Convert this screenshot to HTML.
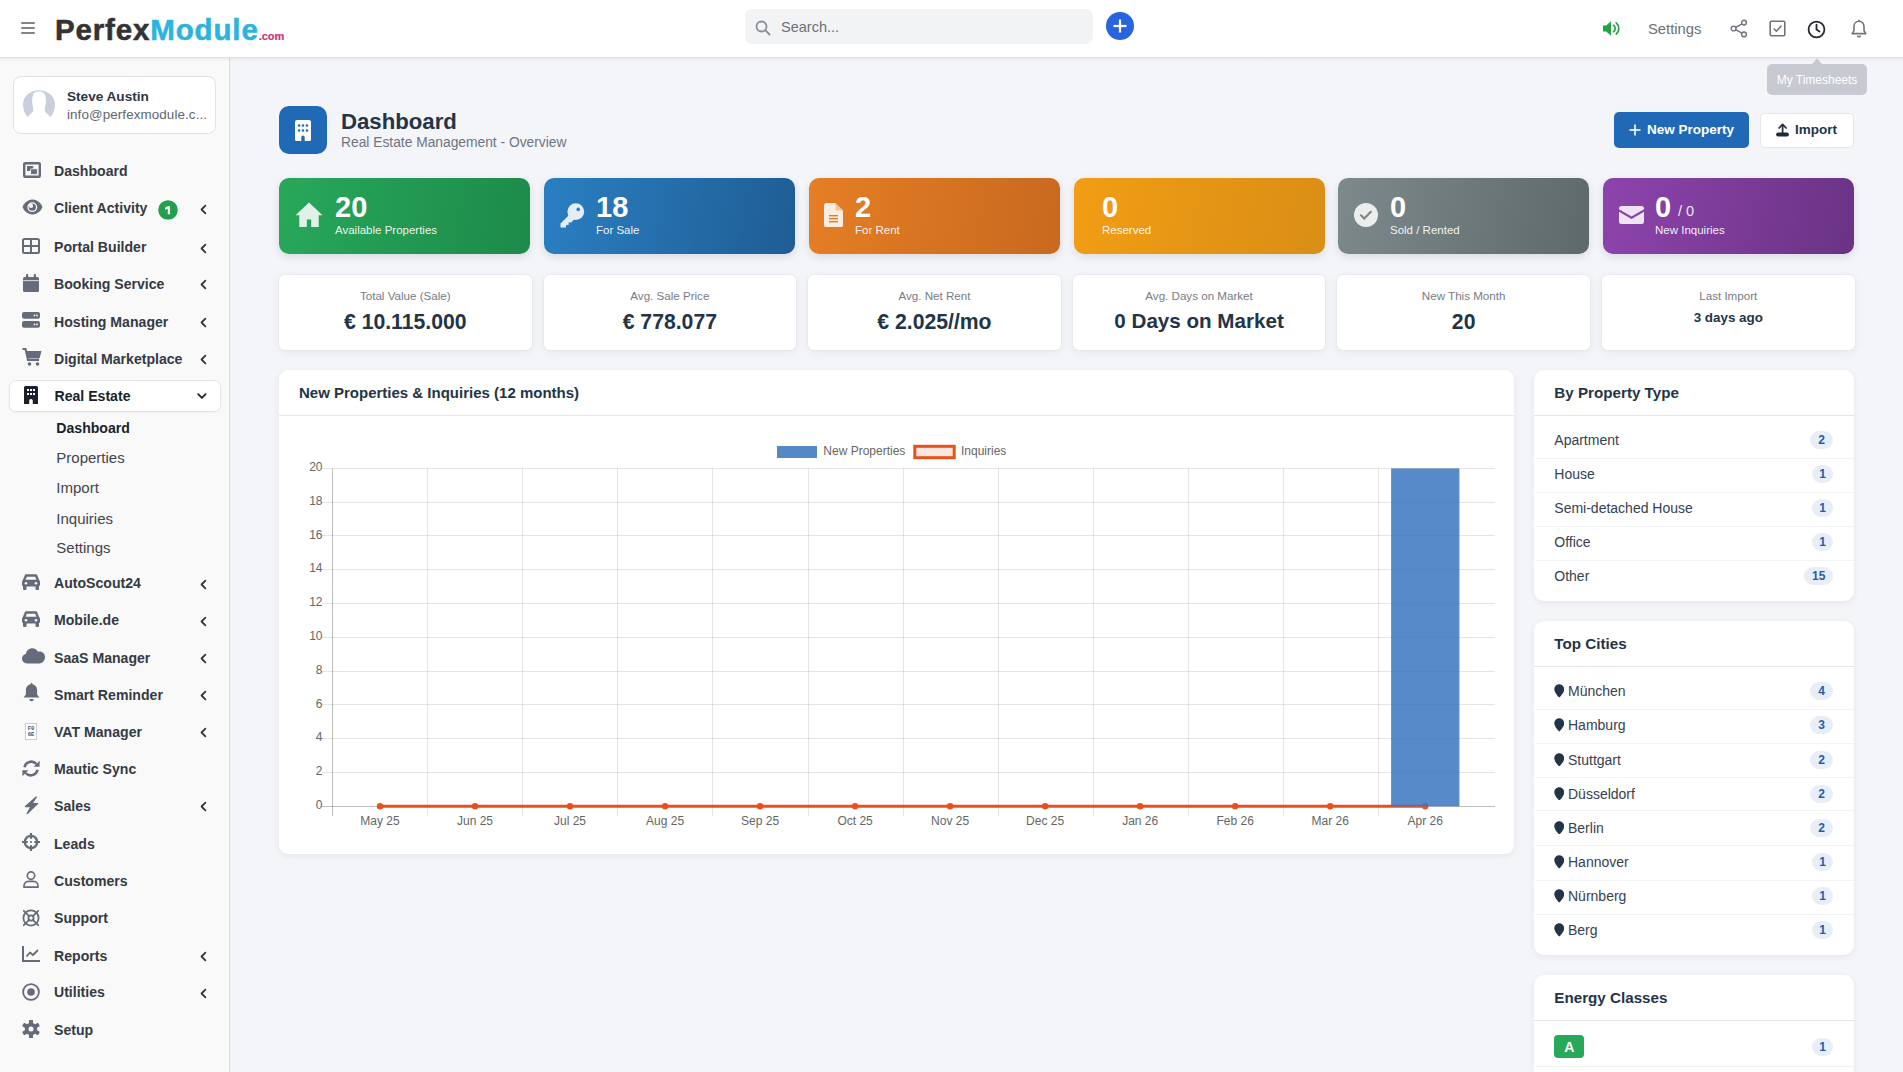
<!DOCTYPE html><html><head><meta charset="utf-8"><style>
*{box-sizing:border-box;margin:0;padding:0}
html,body{width:1903px;height:1072px;overflow:hidden;font-family:"Liberation Sans",sans-serif;background:#f4f5f9;}
svg{display:block}
</style></head><body>
<div style="position:absolute;left:0px;top:58px;width:229px;height:1014px;background:#f9f9f9;"></div>
<div style="position:absolute;left:226px;top:58px;width:3px;height:1014px;background:linear-gradient(90deg,#f9f9f9,#fafbfc);"></div>
<div style="position:absolute;left:229px;top:58px;width:1px;height:1014px;background:#d5d9dd;"></div>
<div style="position:absolute;left:230px;top:58px;width:2px;height:1014px;background:linear-gradient(90deg,#f0f4f7,#f4f5f9);"></div>
<div style="position:absolute;left:12.5px;top:76px;width:203px;height:58px;background:#fff;border:1px solid #e1e3e7;border-radius:8px;"></div>
<svg style="position:absolute;left:23px;top:90px;" width="32" height="28" viewBox="0 0 32 28"><path d="M4.5 27C1.5 23.5 0 19 0 14.5 0 6.5 7 0.3 16 0.3S32 6.5 32 14.5c0 4.5-1.5 9-4.5 12.5L22 21.5c-.6-1.5-.2-3.5.6-6.5.6-3 .4-8-1.2-11.5C20 2 18 1.6 16 1.6s-4 .4-5.4 1.9C9 7 8.8 12 9.4 15c.8 3 1.2 5 .6 6.5z" fill="#c9cfdc"/></svg>
<div style="position:absolute;top:90.16px;font-size:13.6px;line-height:13.6px;font-weight:bold;color:#2f3542;white-space:nowrap;left:67px;">Steve Austin</div>
<div style="position:absolute;top:108.45px;font-size:13.4px;line-height:13.4px;font-weight:normal;color:#5f6673;white-space:nowrap;left:67px;letter-spacing:0.1px;">info@perfexmodule.c...</div>
<div style="position:absolute;top:164.11px;font-size:14.1px;line-height:14.1px;font-weight:bold;color:#353a43;white-space:nowrap;left:54px;">Dashboard</div>
<svg style="position:absolute;left:23px;top:162px;" width="18" height="16" viewBox="0 0 18 16"><rect x="1.2" y="1.2" width="15.6" height="13.6" rx="1" fill="none" stroke="#656b78" stroke-width="2.4"/><rect x="4" y="4" width="6.3" height="5" rx="0.6" fill="#656b78"/><rect x="7.6" y="6.8" width="6.8" height="5.6" rx="0.8" fill="#656b78" stroke="#f9f9f9" stroke-width="0.9"/></svg>
<div style="position:absolute;top:201.41px;font-size:14.1px;line-height:14.1px;font-weight:bold;color:#353a43;white-space:nowrap;left:54px;">Client Activity</div>
<svg style="position:absolute;left:199px;top:203.60000000000002px;" width="9" height="11" viewBox="0 0 9 11"><path d="M6.4 1.7L2.5 5.5l3.9 3.8" fill="none" stroke="#2f343b" stroke-width="1.75" stroke-linecap="round" stroke-linejoin="round"/></svg>
<svg style="position:absolute;left:22px;top:199px;" width="21" height="16" viewBox="0 0 21 16"><path d="M10.5 0.5C5.5 0.5 1.8 4.5 0.5 8c1.3 3.5 5 7.5 10 7.5s8.7-4 10-7.5C19.2 4.5 15.5.5 10.5.5z" fill="#656b78"/><circle cx="10.3" cy="8.2" r="4.9" fill="#f9f9f9"/><circle cx="10.3" cy="8.2" r="3.6" fill="#656b78"/><circle cx="9" cy="6.9" r="2.1" fill="#f9f9f9"/></svg>
<div style="position:absolute;top:240.41px;font-size:14.1px;line-height:14.1px;font-weight:bold;color:#353a43;white-space:nowrap;left:54px;">Portal Builder</div>
<svg style="position:absolute;left:199px;top:242.60000000000002px;" width="9" height="11" viewBox="0 0 9 11"><path d="M6.4 1.7L2.5 5.5l3.9 3.8" fill="none" stroke="#2f343b" stroke-width="1.75" stroke-linecap="round" stroke-linejoin="round"/></svg>
<svg style="position:absolute;left:22px;top:238px;" width="18" height="16" viewBox="0 0 18 16"><rect x="1" y="1" width="16" height="14" rx="1.5" fill="none" stroke="#656b78" stroke-width="2"/><line x1="9" y1="1" x2="9" y2="15" stroke="#656b78" stroke-width="2"/><line x1="1" y1="8" x2="17" y2="8" stroke="#656b78" stroke-width="2"/></svg>
<div style="position:absolute;top:277.01px;font-size:14.1px;line-height:14.1px;font-weight:bold;color:#353a43;white-space:nowrap;left:54px;">Booking Service</div>
<svg style="position:absolute;left:199px;top:279.2px;" width="9" height="11" viewBox="0 0 9 11"><path d="M6.4 1.7L2.5 5.5l3.9 3.8" fill="none" stroke="#2f343b" stroke-width="1.75" stroke-linecap="round" stroke-linejoin="round"/></svg>
<svg style="position:absolute;left:23px;top:274px;" width="16" height="18" viewBox="0 0 16 18"><rect x="0" y="3" width="16" height="15" rx="1.5" fill="#656b78"/><rect x="3" y="0" width="2.2" height="5" rx="1" fill="#656b78"/><rect x="10.8" y="0" width="2.2" height="5" rx="1" fill="#656b78"/><rect x="0" y="6.3" width="16" height="0.8" fill="#f9f9f9"/></svg>
<div style="position:absolute;top:315.01px;font-size:14.1px;line-height:14.1px;font-weight:bold;color:#353a43;white-space:nowrap;left:54px;">Hosting Manager</div>
<svg style="position:absolute;left:199px;top:317.2px;" width="9" height="11" viewBox="0 0 9 11"><path d="M6.4 1.7L2.5 5.5l3.9 3.8" fill="none" stroke="#2f343b" stroke-width="1.75" stroke-linecap="round" stroke-linejoin="round"/></svg>
<svg style="position:absolute;left:22px;top:312px;" width="18" height="16" viewBox="0 0 18 16"><rect x="0" y="0" width="18" height="6.8" rx="2" fill="#656b78"/><rect x="0" y="9" width="18" height="6.8" rx="2" fill="#656b78"/><circle cx="12.5" cy="3.4" r="0.9" fill="#f9f9f9"/><circle cx="15" cy="3.4" r="0.9" fill="#f9f9f9"/><circle cx="12.5" cy="12.4" r="0.9" fill="#f9f9f9"/><circle cx="15" cy="12.4" r="0.9" fill="#f9f9f9"/></svg>
<div style="position:absolute;top:352.21px;font-size:14.1px;line-height:14.1px;font-weight:bold;color:#353a43;white-space:nowrap;left:54px;">Digital Marketplace</div>
<svg style="position:absolute;left:199px;top:354.40000000000003px;" width="9" height="11" viewBox="0 0 9 11"><path d="M6.4 1.7L2.5 5.5l3.9 3.8" fill="none" stroke="#2f343b" stroke-width="1.75" stroke-linecap="round" stroke-linejoin="round"/></svg>
<svg style="position:absolute;left:22px;top:348px;" width="20" height="18" viewBox="0 0 20 18"><path d="M0.5 1h3l2.5 11h11" fill="none" stroke="#656b78" stroke-width="2"/><path d="M4.3 3h15.2l-2 7.5H5.8z" fill="#656b78"/><circle cx="7.5" cy="16" r="1.8" fill="#656b78"/><circle cx="15.5" cy="16" r="1.8" fill="#656b78"/></svg>
<div style="position:absolute;top:576.31px;font-size:14.1px;line-height:14.1px;font-weight:bold;color:#353a43;white-space:nowrap;left:54px;">AutoScout24</div>
<svg style="position:absolute;left:199px;top:578.5px;" width="9" height="11" viewBox="0 0 9 11"><path d="M6.4 1.7L2.5 5.5l3.9 3.8" fill="none" stroke="#2f343b" stroke-width="1.75" stroke-linecap="round" stroke-linejoin="round"/></svg>
<svg style="position:absolute;left:22px;top:574px;" width="18" height="16" viewBox="0 0 18 16"><path d="M4 1.5h10l2.2 5.5H1.8z" fill="none" stroke="#656b78" stroke-width="2.4" stroke-linejoin="round"/><rect x="0" y="6" width="18" height="6.5" rx="2" fill="#656b78"/><rect x="1" y="11" width="3.5" height="5" rx="1" fill="#656b78"/><rect x="13.5" y="11" width="3.5" height="5" rx="1" fill="#656b78"/><circle cx="4" cy="9.2" r="1.3" fill="#f9f9f9"/><circle cx="14" cy="9.2" r="1.3" fill="#f9f9f9"/></svg>
<div style="position:absolute;top:613.31px;font-size:14.1px;line-height:14.1px;font-weight:bold;color:#353a43;white-space:nowrap;left:54px;">Mobile.de</div>
<svg style="position:absolute;left:199px;top:615.5px;" width="9" height="11" viewBox="0 0 9 11"><path d="M6.4 1.7L2.5 5.5l3.9 3.8" fill="none" stroke="#2f343b" stroke-width="1.75" stroke-linecap="round" stroke-linejoin="round"/></svg>
<svg style="position:absolute;left:22px;top:611px;" width="18" height="16" viewBox="0 0 18 16"><path d="M4 1.5h10l2.2 5.5H1.8z" fill="none" stroke="#656b78" stroke-width="2.4" stroke-linejoin="round"/><rect x="0" y="6" width="18" height="6.5" rx="2" fill="#656b78"/><rect x="1" y="11" width="3.5" height="5" rx="1" fill="#656b78"/><rect x="13.5" y="11" width="3.5" height="5" rx="1" fill="#656b78"/><circle cx="4" cy="9.2" r="1.3" fill="#f9f9f9"/><circle cx="14" cy="9.2" r="1.3" fill="#f9f9f9"/></svg>
<div style="position:absolute;top:650.71px;font-size:14.1px;line-height:14.1px;font-weight:bold;color:#353a43;white-space:nowrap;left:54px;">SaaS Manager</div>
<svg style="position:absolute;left:199px;top:652.9px;" width="9" height="11" viewBox="0 0 9 11"><path d="M6.4 1.7L2.5 5.5l3.9 3.8" fill="none" stroke="#2f343b" stroke-width="1.75" stroke-linecap="round" stroke-linejoin="round"/></svg>
<svg style="position:absolute;left:22px;top:648px;" width="23" height="16" viewBox="0 0 23 16"><path d="M5 15.5C2.2 15.5 0 13.3 0 10.6c0-2.4 1.7-4.4 4-4.9C4.3 2.6 7 0.2 10.3.2c2.5 0 4.6 1.4 5.6 3.5.6-.2 1.2-.3 1.8-.3 2.9 0 5.3 2.4 5.3 5.3v.3c0 3.6-2.6 6.5-5.8 6.5z" fill="#656b78"/></svg>
<div style="position:absolute;top:688.11px;font-size:14.1px;line-height:14.1px;font-weight:bold;color:#353a43;white-space:nowrap;left:54px;">Smart Reminder</div>
<svg style="position:absolute;left:199px;top:690.3px;" width="9" height="11" viewBox="0 0 9 11"><path d="M6.4 1.7L2.5 5.5l3.9 3.8" fill="none" stroke="#2f343b" stroke-width="1.75" stroke-linecap="round" stroke-linejoin="round"/></svg>
<svg style="position:absolute;left:22.5px;top:683px;" width="17" height="19" viewBox="0 0 17 19"><path d="M8.5 1.2c-3.2 0-5.6 2.5-5.6 5.8v4.5L0.6 14.6h15.8l-2.3-3.1V7c0-3.3-2.4-5.8-5.6-5.8z" fill="#656b78"/><rect x="7.5" y="0" width="2" height="2.5" rx="1" fill="#656b78"/><path d="M6.3 16a2.2 2.2 0 0 0 4.4 0z" fill="#656b78"/></svg>
<div style="position:absolute;top:725.11px;font-size:14.1px;line-height:14.1px;font-weight:bold;color:#353a43;white-space:nowrap;left:54px;">VAT Manager</div>
<svg style="position:absolute;left:199px;top:727.3px;" width="9" height="11" viewBox="0 0 9 11"><path d="M6.4 1.7L2.5 5.5l3.9 3.8" fill="none" stroke="#2f343b" stroke-width="1.75" stroke-linecap="round" stroke-linejoin="round"/></svg>
<svg style="position:absolute;left:25px;top:723px;" width="12" height="17" viewBox="0 0 12 17"><rect x="0.5" y="0.5" width="11" height="16" fill="#fff" stroke="#c9ccd2" stroke-width="1"/><text x="6" y="7.2" font-size="5.6" font-family="Liberation Mono" font-weight="bold" text-anchor="middle" fill="#4a4f58">F0</text><text x="6" y="13.2" font-size="5.6" font-family="Liberation Mono" font-weight="bold" text-anchor="middle" fill="#4a4f58">6E</text></svg>
<div style="position:absolute;top:762.11px;font-size:14.1px;line-height:14.1px;font-weight:bold;color:#353a43;white-space:nowrap;left:54px;">Mautic Sync</div>
<svg style="position:absolute;left:22px;top:759.5px;" width="18" height="17" viewBox="0 0 18 17"><path d="M2.5 7.2A6.8 6.8 0 0 1 14.3 4" fill="none" stroke="#656b78" stroke-width="2.6"/><path d="M17.6 0.8v6h-6z" fill="#656b78"/><path d="M15.5 9.8A6.8 6.8 0 0 1 3.7 13" fill="none" stroke="#656b78" stroke-width="2.6"/><path d="M0.4 16.2v-6h6z" fill="#656b78"/></svg>
<div style="position:absolute;top:799.11px;font-size:14.1px;line-height:14.1px;font-weight:bold;color:#353a43;white-space:nowrap;left:54px;">Sales</div>
<svg style="position:absolute;left:199px;top:801.3px;" width="9" height="11" viewBox="0 0 9 11"><path d="M6.4 1.7L2.5 5.5l3.9 3.8" fill="none" stroke="#2f343b" stroke-width="1.75" stroke-linecap="round" stroke-linejoin="round"/></svg>
<svg style="position:absolute;left:23.5px;top:795.5px;" width="15" height="18.5" viewBox="0 0 15 18.5"><path d="M12.3 1L1.5 10.6h5.6L3.2 17.6 13.6 7.6H8z" fill="#656b78" stroke="#656b78" stroke-width="1.3" stroke-linejoin="round"/></svg>
<div style="position:absolute;top:836.91px;font-size:14.1px;line-height:14.1px;font-weight:bold;color:#353a43;white-space:nowrap;left:54px;">Leads</div>
<svg style="position:absolute;left:22px;top:833px;" width="18" height="18" viewBox="0 0 18 18"><circle cx="9" cy="9" r="6.2" fill="none" stroke="#656b78" stroke-width="2.3"/><path d="M9 0.3v4.6M9 13.1v4.6M0.3 9h4.6M13.1 9h4.6" stroke="#656b78" stroke-width="2.2" stroke-linecap="round"/><circle cx="9" cy="9" r="1.1" fill="#656b78"/></svg>
<div style="position:absolute;top:874.11px;font-size:14.1px;line-height:14.1px;font-weight:bold;color:#353a43;white-space:nowrap;left:54px;">Customers</div>
<svg style="position:absolute;left:23px;top:871px;" width="16" height="17" viewBox="0 0 16 17"><circle cx="8" cy="4.6" r="3.7" fill="none" stroke="#656b78" stroke-width="1.7"/><path d="M1 16.2v-1.2c0-2.7 2.2-4.6 4.6-4.6h4.8c2.4 0 4.6 1.9 4.6 4.6v1.2z" fill="none" stroke="#656b78" stroke-width="1.7" stroke-linejoin="round"/></svg>
<div style="position:absolute;top:911.11px;font-size:14.1px;line-height:14.1px;font-weight:bold;color:#353a43;white-space:nowrap;left:54px;">Support</div>
<svg style="position:absolute;left:22px;top:909px;" width="18" height="18" viewBox="0 0 18 18"><circle cx="9" cy="9" r="7.6" fill="none" stroke="#656b78" stroke-width="1.8"/><circle cx="9" cy="9" r="2.6" fill="none" stroke="#656b78" stroke-width="1.8"/><path d="M1.8 1.8l5.3 5.3M16.2 1.8l-5.3 5.3M1.8 16.2l5.3-5.3M16.2 16.2l-5.3-5.3" stroke="#656b78" stroke-width="1.8" stroke-linecap="round"/></svg>
<div style="position:absolute;top:948.61px;font-size:14.1px;line-height:14.1px;font-weight:bold;color:#353a43;white-space:nowrap;left:54px;">Reports</div>
<svg style="position:absolute;left:199px;top:950.8px;" width="9" height="11" viewBox="0 0 9 11"><path d="M6.4 1.7L2.5 5.5l3.9 3.8" fill="none" stroke="#2f343b" stroke-width="1.75" stroke-linecap="round" stroke-linejoin="round"/></svg>
<svg style="position:absolute;left:22px;top:946px;" width="18" height="16" viewBox="0 0 18 16"><path d="M1 0v15h17" fill="none" stroke="#656b78" stroke-width="2"/><path d="M4.5 10.5l3.5-4 3 2.5 5-5" fill="none" stroke="#656b78" stroke-width="1.8" stroke-linejoin="round"/></svg>
<div style="position:absolute;top:985.31px;font-size:14.1px;line-height:14.1px;font-weight:bold;color:#353a43;white-space:nowrap;left:54px;">Utilities</div>
<svg style="position:absolute;left:199px;top:987.5px;" width="9" height="11" viewBox="0 0 9 11"><path d="M6.4 1.7L2.5 5.5l3.9 3.8" fill="none" stroke="#2f343b" stroke-width="1.75" stroke-linecap="round" stroke-linejoin="round"/></svg>
<svg style="position:absolute;left:22px;top:983px;" width="18" height="18" viewBox="0 0 18 18"><circle cx="9" cy="9" r="7.9" fill="none" stroke="#656b78" stroke-width="1.8"/><circle cx="9" cy="9" r="3.8" fill="#656b78"/></svg>
<div style="position:absolute;top:1023.11px;font-size:14.1px;line-height:14.1px;font-weight:bold;color:#353a43;white-space:nowrap;left:54px;">Setup</div>
<svg style="position:absolute;left:22px;top:1020px;" width="18" height="18" viewBox="0 0 18 18"><rect x="7" y="-0.2" width="4" height="4.5" rx="0.8" fill="#656b78" transform="rotate(0 9 9)"/><rect x="7" y="-0.2" width="4" height="4.5" rx="0.8" fill="#656b78" transform="rotate(60 9 9)"/><rect x="7" y="-0.2" width="4" height="4.5" rx="0.8" fill="#656b78" transform="rotate(120 9 9)"/><rect x="7" y="-0.2" width="4" height="4.5" rx="0.8" fill="#656b78" transform="rotate(180 9 9)"/><rect x="7" y="-0.2" width="4" height="4.5" rx="0.8" fill="#656b78" transform="rotate(240 9 9)"/><rect x="7" y="-0.2" width="4" height="4.5" rx="0.8" fill="#656b78" transform="rotate(300 9 9)"/><circle cx="9" cy="9" r="6.2" fill="#656b78"/><circle cx="9" cy="9" r="2.5" fill="#f9f9f9"/></svg>
<svg style="position:absolute;left:158px;top:200px;" width="20" height="20" viewBox="0 0 20 20"><circle cx="10" cy="10" r="9.8" fill="#22a04b"/><path d="M7 7.7L10.1 6.1h1.8v8.1H9.8V8.7L7 9.7z" fill="#fff"/></svg>
<div style="position:absolute;left:8.7px;top:379.8px;width:212.7px;height:32.5px;background:#fff;border:1px solid #e3e5e9;border-radius:7px;box-shadow:0 1px 2px rgba(0,0,0,.04);"></div>
<svg style="position:absolute;left:24px;top:386px;" width="14" height="18" viewBox="0 0 14 18"><path d="M1.5 0h11A1.5 1.5 0 0 1 14 1.5V18H8.8v-3.2a1.8 1.8 0 0 0-3.6 0V18H0V1.5A1.5 1.5 0 0 1 1.5 0z" fill="#1b1f2b"/><rect x="3" y="3" width="2" height="2" fill="#fff"/><rect x="3" y="7" width="2" height="2" fill="#fff"/><rect x="6" y="3" width="2" height="2" fill="#fff"/><rect x="6" y="7" width="2" height="2" fill="#fff"/><rect x="9" y="3" width="2" height="2" fill="#fff"/><rect x="9" y="7" width="2" height="2" fill="#fff"/></svg>
<div style="position:absolute;top:389.11px;font-size:14.1px;line-height:14.1px;font-weight:bold;color:#1b1f2b;white-space:nowrap;left:54.5px;">Real Estate</div>
<svg style="position:absolute;left:197px;top:393px;" width="10" height="7" viewBox="0 0 10 7"><path d="M1.2 1.2l3.7 3.7 3.7-3.7" fill="none" stroke="#1b1f2b" stroke-width="1.75" stroke-linecap="round" stroke-linejoin="round"/></svg>
<div style="position:absolute;top:421.11px;font-size:14.1px;line-height:14.1px;font-weight:bold;color:#1b1f2b;white-space:nowrap;left:56.3px;">Dashboard</div>
<div style="position:absolute;top:450.47px;font-size:15px;line-height:15px;font-weight:normal;color:#3f454e;white-space:nowrap;left:56.3px;">Properties</div>
<div style="position:absolute;top:480.17px;font-size:15px;line-height:15px;font-weight:normal;color:#3f454e;white-space:nowrap;left:56.3px;">Import</div>
<div style="position:absolute;top:510.67px;font-size:15px;line-height:15px;font-weight:normal;color:#3f454e;white-space:nowrap;left:56.3px;">Inquiries</div>
<div style="position:absolute;top:540.47px;font-size:15px;line-height:15px;font-weight:normal;color:#3f454e;white-space:nowrap;left:56.3px;">Settings</div>
<div style="position:absolute;left:0px;top:0px;width:1903px;height:57px;background:#fff;"></div>
<div style="position:absolute;left:0px;top:57px;width:1903px;height:1px;background:#dcdee2;"></div>
<div style="position:absolute;left:21px;top:22px;width:14px;height:2px;background:#80858d;border-radius:1px;"></div>
<div style="position:absolute;left:21px;top:27px;width:14px;height:2px;background:#80858d;border-radius:1px;"></div>
<div style="position:absolute;left:21px;top:32px;width:14px;height:2px;background:#80858d;border-radius:1px;"></div>
<div style="position:absolute;left:55px;top:12.5px;font-size:29.5px;line-height:34px;font-weight:bold;white-space:nowrap;letter-spacing:0.85px;-webkit-text-stroke:0.55px"><span style="color:#333;-webkit-text-stroke-color:#333">Perfex</span><span style="color:#2cb4dd;-webkit-text-stroke-color:#2cb4dd">Module</span><span style="color:#c8347f;-webkit-text-stroke:0.2px #c8347f;font-size:11px;letter-spacing:0px">.com</span></div>
<div style="position:absolute;left:745px;top:9px;width:348px;height:35px;background:#f2f3f5;border-radius:7px;"></div>
<svg style="position:absolute;left:755px;top:20px;" width="16" height="16" viewBox="0 0 16 16"><circle cx="6.5" cy="6.5" r="5" fill="none" stroke="#8a8f97" stroke-width="1.8"/><line x1="10.2" y1="10.2" x2="14.5" y2="14.5" stroke="#8a8f97" stroke-width="1.9" stroke-linecap="round"/></svg>
<div style="position:absolute;top:19.92px;font-size:14.5px;line-height:14.5px;font-weight:normal;color:#6b7079;white-space:nowrap;left:781px;">Search...</div>
<svg style="position:absolute;left:1106px;top:12px;" width="28" height="28" viewBox="0 0 28 28"><circle cx="14" cy="14" r="14" fill="#2864e0"/><rect x="7.5" y="12.9" width="13" height="2.2" fill="#fff"/><rect x="12.9" y="7.5" width="2.2" height="13" fill="#fff"/></svg>
<svg style="position:absolute;left:1602px;top:20px;" width="20" height="17" viewBox="0 0 20 17"><path d="M1 5.5h3.2L9 1.2v14.6L4.2 11.5H1z" fill="#25a244"/><path d="M11.6 5.3a4 4 0 0 1 0 6.4" fill="none" stroke="#25a244" stroke-width="1.7" stroke-linecap="round"/><path d="M14.2 2.8a7.5 7.5 0 0 1 0 11.4" fill="none" stroke="#25a244" stroke-width="1.7" stroke-linecap="round"/></svg>
<div style="position:absolute;top:21.57px;font-size:14.8px;line-height:14.8px;font-weight:normal;color:#6b7079;white-space:nowrap;left:1648px;">Settings</div>
<svg style="position:absolute;left:1730px;top:19px;" width="18" height="19" viewBox="0 0 18 19"><circle cx="14" cy="3.6" r="2.4" fill="none" stroke="#6f747c" stroke-width="1.4"/><circle cx="3.6" cy="9.5" r="2.4" fill="none" stroke="#6f747c" stroke-width="1.4"/><circle cx="14" cy="15.4" r="2.4" fill="none" stroke="#6f747c" stroke-width="1.4"/><line x1="5.7" y1="8.3" x2="11.9" y2="4.8" stroke="#6f747c" stroke-width="1.4"/><line x1="5.7" y1="10.7" x2="11.9" y2="14.2" stroke="#6f747c" stroke-width="1.4"/></svg>
<svg style="position:absolute;left:1769px;top:20px;" width="17" height="17" viewBox="0 0 17 17"><rect x="1.2" y="1.2" width="14.6" height="14.6" rx="1.2" fill="none" stroke="#6f747c" stroke-width="1.6"/><path d="M4.8 8.6l2.6 2.6 5-5.4" fill="none" stroke="#6f747c" stroke-width="1.6"/></svg>
<svg style="position:absolute;left:1807px;top:20px;" width="19" height="19" viewBox="0 0 19 19"><circle cx="9.5" cy="9.5" r="7.9" fill="none" stroke="#23262b" stroke-width="1.8"/><path d="M9.5 4.6v5l3 2" fill="none" stroke="#23262b" stroke-width="1.8" stroke-linecap="round"/></svg>
<svg style="position:absolute;left:1850px;top:19px;" width="18" height="20" viewBox="0 0 18 20"><path d="M9 2.2c-3 0-5 2.3-5 5.2v4.2l-1.9 3h13.8l-1.9-3V7.4c0-2.9-2-5.2-5-5.2z" fill="none" stroke="#6f747c" stroke-width="1.6" stroke-linejoin="round"/><path d="M7.3 16.8a1.8 1.8 0 0 0 3.4 0" fill="#6f747c" stroke="#6f747c" stroke-width="1.2"/><line x1="9" y1="0.8" x2="9" y2="2.4" stroke="#6f747c" stroke-width="1.6"/></svg>
<svg style="position:absolute;left:1811px;top:58px;" width="12" height="7" viewBox="0 0 12 7"><path d="M0 7L6 0.5 12 7z" fill="#c7cad0"/></svg>
<div style="position:absolute;left:1767px;top:64px;width:100px;height:31px;background:#c7cad0;border-radius:5px;"></div>
<div style="position:absolute;top:73.64px;font-size:12px;line-height:12px;font-weight:normal;color:#fff;white-space:nowrap;left:1517px;width:600px;text-align:center;">My Timesheets</div>
<div style="position:absolute;left:0px;top:58px;width:1903px;height:4px;background:linear-gradient(180deg,rgba(30,40,60,.05),rgba(30,40,60,0));"></div>
<div style="position:absolute;left:279px;top:105.6px;width:48px;height:48.4px;background:#1f69b6;border-radius:10px;"></div>
<svg style="position:absolute;left:295px;top:120px;" width="16" height="21.2" viewBox="0 0 16 21.2"><path d="M2 0h12a2 2 0 0 1 2 2v17.2a2 2 0 0 1-2 2h-4.3v-4a1.7 1.7 0 0 0-3.4 0v4H2a2 2 0 0 1-2-2V2a2 2 0 0 1 2-2z" fill="#fff"/><circle cx="4.1" cy="5.6" r="1.25" fill="#1f69b6"/><circle cx="4.1" cy="10.5" r="1.25" fill="#1f69b6"/><circle cx="8" cy="5.6" r="1.25" fill="#1f69b6"/><circle cx="8" cy="10.5" r="1.25" fill="#1f69b6"/><circle cx="12" cy="5.6" r="1.25" fill="#1f69b6"/><circle cx="12" cy="10.5" r="1.25" fill="#1f69b6"/></svg>
<div style="position:absolute;top:110.96px;font-size:22.2px;line-height:22.2px;font-weight:bold;color:#243447;white-space:nowrap;left:341px;">Dashboard</div>
<div style="position:absolute;top:135.76px;font-size:13.8px;line-height:13.8px;font-weight:normal;color:#6e7480;white-space:nowrap;left:341px;">Real Estate Management - Overview</div>
<div style="position:absolute;left:1614px;top:112px;width:135px;height:36px;background:#1f69b6;border-radius:5px;"></div>
<svg style="position:absolute;left:1629px;top:124px;" width="12" height="12" viewBox="0 0 12 12"><rect x="0.5" y="5.2" width="11" height="1.6" fill="#fff"/><rect x="5.2" y="0.5" width="1.6" height="11" fill="#fff"/></svg>
<div style="position:absolute;top:122.81px;font-size:13.5px;line-height:13.5px;font-weight:bold;color:#fff;white-space:nowrap;left:1647px;">New Property</div>
<div style="position:absolute;left:1759.7px;top:112.5px;width:94px;height:35px;background:#fff;border:1px solid #e3e6ea;border-radius:5px;"></div>
<svg style="position:absolute;left:1775px;top:122px;" width="15" height="16" viewBox="0 0 15 16"><path d="M4.1 6L7.6 2.3 11.1 6" fill="none" stroke="#1e2a38" stroke-width="1.7" stroke-linecap="round" stroke-linejoin="round"/><path d="M7.6 2.8V11" stroke="#1e2a38" stroke-width="1.7"/><rect x="1.1" y="10.6" width="12.8" height="4" rx="2" fill="#1e2a38"/></svg>
<div style="position:absolute;top:122.81px;font-size:13.5px;line-height:13.5px;font-weight:bold;color:#243447;white-space:nowrap;left:1795px;">Import</div>
<div style="position:absolute;left:279px;top:178px;width:251px;height:76px;background:linear-gradient(100deg,#28a85b,#1d8a4a);border-radius:10px;box-shadow:0 3px 8px rgba(30,40,60,.12);"></div>
<div style="position:absolute;top:193.43px;font-size:29px;line-height:29px;font-weight:bold;color:#fff;white-space:nowrap;left:335px;">20</div>
<div style="position:absolute;top:224.98px;font-size:11.5px;line-height:11.5px;font-weight:normal;color:rgba(255,255,255,.93);white-space:nowrap;left:335px;">Available Properties</div>
<svg style="position:absolute;left:294.5px;top:202px;" width="28" height="25" viewBox="0 0 28 25"><path d="M14 0.5L0.5 13.2h3.8V25h7.5v-7.6h4.4V25h7.5V13.2h3.8z" fill="rgba(255,255,255,.86)"/></svg>
<div style="position:absolute;left:544px;top:178px;width:251px;height:76px;background:linear-gradient(100deg,#2a7fc1,#1f5d94);border-radius:10px;box-shadow:0 3px 8px rgba(30,40,60,.12);"></div>
<div style="position:absolute;top:193.43px;font-size:29px;line-height:29px;font-weight:bold;color:#fff;white-space:nowrap;left:596px;">18</div>
<div style="position:absolute;top:224.98px;font-size:11.5px;line-height:11.5px;font-weight:normal;color:rgba(255,255,255,.93);white-space:nowrap;left:596px;">For Sale</div>
<svg style="position:absolute;left:559.5px;top:202.5px;" width="25" height="25" viewBox="0 0 25 25"><g opacity=".87"><circle cx="15.8" cy="8.6" r="8.4" fill="#fff"/><path d="M10.5 10.5L0.5 20.5v4h5.5v-2.5h2.6v-2.6h2.6l3.6-3.6z" fill="#fff"/></g><circle cx="18.2" cy="6.4" r="1.8" fill="#2a7fc1"/></svg>
<div style="position:absolute;left:809px;top:178px;width:251px;height:76px;background:linear-gradient(100deg,#e57e25,#c8691f);border-radius:10px;box-shadow:0 3px 8px rgba(30,40,60,.12);"></div>
<div style="position:absolute;top:193.43px;font-size:29px;line-height:29px;font-weight:bold;color:#fff;white-space:nowrap;left:855px;">2</div>
<div style="position:absolute;top:224.98px;font-size:11.5px;line-height:11.5px;font-weight:normal;color:rgba(255,255,255,.93);white-space:nowrap;left:855px;">For Rent</div>
<svg style="position:absolute;left:824px;top:202.8px;" width="19" height="24.5" viewBox="0 0 19 24.5"><path d="M2 0h9.5L19 7.5V22a2.5 2.5 0 0 1-2.5 2.5h-14A2.5 2.5 0 0 1 0 22V2.5A2.5 2.5 0 0 1 2 0z" fill="rgba(255,255,255,.86)"/><path d="M11.5 0v7.5H19" fill="#e57e25" opacity=".35"/><rect x="5" y="12" width="9" height="1.4" fill="#e57e25"/><rect x="5" y="15" width="9" height="1.4" fill="#e57e25"/><rect x="5" y="18" width="9" height="1.4" fill="#e57e25"/></svg>
<div style="position:absolute;left:1074px;top:178px;width:251px;height:76px;background:linear-gradient(100deg,#f29d14,#d98e16);border-radius:10px;box-shadow:0 3px 8px rgba(30,40,60,.12);"></div>
<div style="position:absolute;top:193.43px;font-size:29px;line-height:29px;font-weight:bold;color:#fff;white-space:nowrap;left:1102px;">0</div>
<div style="position:absolute;top:224.98px;font-size:11.5px;line-height:11.5px;font-weight:normal;color:rgba(255,255,255,.93);white-space:nowrap;left:1102px;">Reserved</div>
<div style="position:absolute;left:1338px;top:178px;width:251px;height:76px;background:linear-gradient(100deg,#7d898a,#5e6a6a);border-radius:10px;box-shadow:0 3px 8px rgba(30,40,60,.12);"></div>
<div style="position:absolute;top:193.43px;font-size:29px;line-height:29px;font-weight:bold;color:#fff;white-space:nowrap;left:1390px;">0</div>
<div style="position:absolute;top:224.98px;font-size:11.5px;line-height:11.5px;font-weight:normal;color:rgba(255,255,255,.93);white-space:nowrap;left:1390px;">Sold / Rented</div>
<svg style="position:absolute;left:1354px;top:203px;" width="24" height="24" viewBox="0 0 24 24"><circle cx="12" cy="12" r="12" fill="rgba(255,255,255,.86)"/><path d="M7 12.3l3.3 3.3 6.5-6.8" fill="none" stroke="#7d898a" stroke-width="2.2" stroke-linecap="round" stroke-linejoin="round"/></svg>
<div style="position:absolute;left:1603px;top:178px;width:251px;height:76px;background:linear-gradient(100deg,#8d44ac,#6a3384);border-radius:10px;box-shadow:0 3px 8px rgba(30,40,60,.12);"></div>
<div style="position:absolute;top:193.43px;font-size:29px;line-height:29px;font-weight:bold;color:#fff;white-space:nowrap;left:1655px;">0</div>
<div style="position:absolute;top:204.42px;font-size:14.5px;line-height:14.5px;font-weight:normal;color:rgba(255,255,255,.9);white-space:nowrap;left:1678px;">/ 0</div>
<div style="position:absolute;top:224.98px;font-size:11.5px;line-height:11.5px;font-weight:normal;color:rgba(255,255,255,.93);white-space:nowrap;left:1655px;">New Inquiries</div>
<svg style="position:absolute;left:1619px;top:206px;" width="25" height="18" viewBox="0 0 25 18"><path d="M0 2.5A2.5 2.5 0 0 1 2.5 0h20A2.5 2.5 0 0 1 25 2.5v.8L12.5 10.5 0 3.3z" fill="rgba(255,255,255,.86)"/><path d="M0 5.8l12.5 7.2L25 5.8V15.5a2.5 2.5 0 0 1-2.5 2.5h-20A2.5 2.5 0 0 1 0 15.5z" fill="rgba(255,255,255,.86)"/></svg>
<div style="position:absolute;left:279.0px;top:274.5px;width:252.5px;height:75.5px;background:#fff;border-radius:6px;box-shadow:0 0 0 1px rgba(30,40,60,.025),0 2px 8px rgba(30,40,60,.07);"></div>
<div style="position:absolute;top:290.13px;font-size:11.6px;line-height:11.6px;font-weight:normal;color:#767b85;white-space:nowrap;left:105.25px;width:600px;text-align:center;">Total Value (Sale)</div>
<div style="position:absolute;top:311.04px;font-size:21.2px;line-height:21.2px;font-weight:bold;color:#243447;white-space:nowrap;left:105.25px;width:600px;text-align:center;">€ 10.115.000</div>
<div style="position:absolute;left:543.6px;top:274.5px;width:252.5px;height:75.5px;background:#fff;border-radius:6px;box-shadow:0 0 0 1px rgba(30,40,60,.025),0 2px 8px rgba(30,40,60,.07);"></div>
<div style="position:absolute;top:290.13px;font-size:11.6px;line-height:11.6px;font-weight:normal;color:#767b85;white-space:nowrap;left:369.85px;width:600px;text-align:center;">Avg. Sale Price</div>
<div style="position:absolute;top:311.04px;font-size:21.2px;line-height:21.2px;font-weight:bold;color:#243447;white-space:nowrap;left:369.85px;width:600px;text-align:center;">€ 778.077</div>
<div style="position:absolute;left:808.2px;top:274.5px;width:252.5px;height:75.5px;background:#fff;border-radius:6px;box-shadow:0 0 0 1px rgba(30,40,60,.025),0 2px 8px rgba(30,40,60,.07);"></div>
<div style="position:absolute;top:290.13px;font-size:11.6px;line-height:11.6px;font-weight:normal;color:#767b85;white-space:nowrap;left:634.45px;width:600px;text-align:center;">Avg. Net Rent</div>
<div style="position:absolute;top:311.04px;font-size:21.2px;line-height:21.2px;font-weight:bold;color:#243447;white-space:nowrap;left:634.45px;width:600px;text-align:center;">€ 2.025//mo</div>
<div style="position:absolute;left:1072.8px;top:274.5px;width:252.5px;height:75.5px;background:#fff;border-radius:6px;box-shadow:0 0 0 1px rgba(30,40,60,.025),0 2px 8px rgba(30,40,60,.07);"></div>
<div style="position:absolute;top:290.13px;font-size:11.6px;line-height:11.6px;font-weight:normal;color:#767b85;white-space:nowrap;left:899.0500000000002px;width:600px;text-align:center;">Avg. Days on Market</div>
<div style="position:absolute;top:311.34px;font-size:20.6px;line-height:20.6px;font-weight:bold;color:#243447;white-space:nowrap;left:899.0500000000002px;width:600px;text-align:center;">0 Days on Market</div>
<div style="position:absolute;left:1337.4px;top:274.5px;width:252.5px;height:75.5px;background:#fff;border-radius:6px;box-shadow:0 0 0 1px rgba(30,40,60,.025),0 2px 8px rgba(30,40,60,.07);"></div>
<div style="position:absolute;top:290.13px;font-size:11.6px;line-height:11.6px;font-weight:normal;color:#767b85;white-space:nowrap;left:1163.65px;width:600px;text-align:center;">New This Month</div>
<div style="position:absolute;top:311.04px;font-size:21.2px;line-height:21.2px;font-weight:bold;color:#243447;white-space:nowrap;left:1163.65px;width:600px;text-align:center;">20</div>
<div style="position:absolute;left:1602.0px;top:274.5px;width:252.5px;height:75.5px;background:#fff;border-radius:6px;box-shadow:0 0 0 1px rgba(30,40,60,.025),0 2px 8px rgba(30,40,60,.07);"></div>
<div style="position:absolute;top:290.13px;font-size:11.6px;line-height:11.6px;font-weight:normal;color:#767b85;white-space:nowrap;left:1428.25px;width:600px;text-align:center;">Last Import</div>
<div style="position:absolute;top:311.25px;font-size:13.4px;line-height:13.4px;font-weight:bold;color:#243447;white-space:nowrap;left:1428.25px;width:600px;text-align:center;">3 days ago</div>
<div style="position:absolute;left:279px;top:370px;width:1235px;height:484px;background:#fff;border-radius:9px;box-shadow:0 2px 6px rgba(30,40,60,.07);"></div>
<div style="position:absolute;left:279px;top:414.5px;width:1235px;height:1px;background:#e6e8ec;"></div>
<div style="position:absolute;top:385.27px;font-size:15px;line-height:15px;font-weight:bold;color:#243447;white-space:nowrap;left:299px;">New Properties &amp; Inquiries (12 months)</div>
<svg style="position:absolute;left:0;top:0" width="1903" height="1072" viewBox="0 0 1903 1072"><line x1="322" y1="468.5" x2="1495" y2="468.5" stroke="rgba(0,0,0,0.1)" stroke-width="1"/><line x1="322" y1="502.5" x2="1495" y2="502.5" stroke="rgba(0,0,0,0.1)" stroke-width="1"/><line x1="322" y1="535.5" x2="1495" y2="535.5" stroke="rgba(0,0,0,0.1)" stroke-width="1"/><line x1="322" y1="569.5" x2="1495" y2="569.5" stroke="rgba(0,0,0,0.1)" stroke-width="1"/><line x1="322" y1="603.5" x2="1495" y2="603.5" stroke="rgba(0,0,0,0.1)" stroke-width="1"/><line x1="322" y1="637.5" x2="1495" y2="637.5" stroke="rgba(0,0,0,0.1)" stroke-width="1"/><line x1="322" y1="671.5" x2="1495" y2="671.5" stroke="rgba(0,0,0,0.1)" stroke-width="1"/><line x1="322" y1="704.5" x2="1495" y2="704.5" stroke="rgba(0,0,0,0.1)" stroke-width="1"/><line x1="322" y1="738.5" x2="1495" y2="738.5" stroke="rgba(0,0,0,0.1)" stroke-width="1"/><line x1="322" y1="772.5" x2="1495" y2="772.5" stroke="rgba(0,0,0,0.1)" stroke-width="1"/><line x1="322" y1="806.5" x2="1495" y2="806.5" stroke="rgba(0,0,0,0.25)" stroke-width="1"/><line x1="332.5" y1="468.4" x2="332.5" y2="816" stroke="rgba(0,0,0,0.25)" stroke-width="1"/><line x1="427.5" y1="468.4" x2="427.5" y2="816" stroke="rgba(0,0,0,0.1)" stroke-width="1"/><line x1="522.5" y1="468.4" x2="522.5" y2="816" stroke="rgba(0,0,0,0.1)" stroke-width="1"/><line x1="617.5" y1="468.4" x2="617.5" y2="816" stroke="rgba(0,0,0,0.1)" stroke-width="1"/><line x1="712.5" y1="468.4" x2="712.5" y2="816" stroke="rgba(0,0,0,0.1)" stroke-width="1"/><line x1="808.5" y1="468.4" x2="808.5" y2="816" stroke="rgba(0,0,0,0.1)" stroke-width="1"/><line x1="903.5" y1="468.4" x2="903.5" y2="816" stroke="rgba(0,0,0,0.1)" stroke-width="1"/><line x1="998.5" y1="468.4" x2="998.5" y2="816" stroke="rgba(0,0,0,0.1)" stroke-width="1"/><line x1="1093.5" y1="468.4" x2="1093.5" y2="816" stroke="rgba(0,0,0,0.1)" stroke-width="1"/><line x1="1188.5" y1="468.4" x2="1188.5" y2="816" stroke="rgba(0,0,0,0.1)" stroke-width="1"/><line x1="1283.5" y1="468.4" x2="1283.5" y2="816" stroke="rgba(0,0,0,0.1)" stroke-width="1"/><line x1="1378.5" y1="468.4" x2="1378.5" y2="816" stroke="rgba(0,0,0,0.1)" stroke-width="1"/><line x1="380" y1="806.3" x2="1425.25" y2="806.3" stroke="#e8501c" stroke-width="3"/><circle cx="380.00" cy="806.3" r="3.2" fill="#e8501c"/><circle cx="475.02" cy="806.3" r="3.2" fill="#e8501c"/><circle cx="570.04" cy="806.3" r="3.2" fill="#e8501c"/><circle cx="665.06" cy="806.3" r="3.2" fill="#e8501c"/><circle cx="760.08" cy="806.3" r="3.2" fill="#e8501c"/><circle cx="855.10" cy="806.3" r="3.2" fill="#e8501c"/><circle cx="950.12" cy="806.3" r="3.2" fill="#e8501c"/><circle cx="1045.14" cy="806.3" r="3.2" fill="#e8501c"/><circle cx="1140.16" cy="806.3" r="3.2" fill="#e8501c"/><circle cx="1235.18" cy="806.3" r="3.2" fill="#e8501c"/><circle cx="1330.20" cy="806.3" r="3.2" fill="#e8501c"/><circle cx="1425.22" cy="806.3" r="3.2" fill="#e8501c"/><rect x="1391.1" y="468.4" width="68.3" height="337.9" fill="rgb(57,118,190)" fill-opacity="0.85"/><rect x="777" y="446" width="40" height="12" fill="#5589c6"/><rect x="914.8" y="446.3" width="39.4" height="11.4" fill="#fde6dd" stroke="#e8501c" stroke-width="3"/></svg>
<div style="position:absolute;top:445.14px;font-size:12px;line-height:12px;font-weight:normal;color:#666;white-space:nowrap;left:823.3px;">New Properties</div>
<div style="position:absolute;top:445.14px;font-size:12px;line-height:12px;font-weight:normal;color:#666;white-space:nowrap;left:961px;">Inquiries</div>
<div style="position:absolute;top:461.04px;font-size:12px;line-height:12px;font-weight:normal;color:#666;white-space:nowrap;right:1580.5px;text-align:right;">20</div>
<div style="position:absolute;top:494.83px;font-size:12px;line-height:12px;font-weight:normal;color:#666;white-space:nowrap;right:1580.5px;text-align:right;">18</div>
<div style="position:absolute;top:528.62px;font-size:12px;line-height:12px;font-weight:normal;color:#666;white-space:nowrap;right:1580.5px;text-align:right;">16</div>
<div style="position:absolute;top:562.41px;font-size:12px;line-height:12px;font-weight:normal;color:#666;white-space:nowrap;right:1580.5px;text-align:right;">14</div>
<div style="position:absolute;top:596.20px;font-size:12px;line-height:12px;font-weight:normal;color:#666;white-space:nowrap;right:1580.5px;text-align:right;">12</div>
<div style="position:absolute;top:629.99px;font-size:12px;line-height:12px;font-weight:normal;color:#666;white-space:nowrap;right:1580.5px;text-align:right;">10</div>
<div style="position:absolute;top:663.78px;font-size:12px;line-height:12px;font-weight:normal;color:#666;white-space:nowrap;right:1580.5px;text-align:right;">8</div>
<div style="position:absolute;top:697.57px;font-size:12px;line-height:12px;font-weight:normal;color:#666;white-space:nowrap;right:1580.5px;text-align:right;">6</div>
<div style="position:absolute;top:731.36px;font-size:12px;line-height:12px;font-weight:normal;color:#666;white-space:nowrap;right:1580.5px;text-align:right;">4</div>
<div style="position:absolute;top:765.15px;font-size:12px;line-height:12px;font-weight:normal;color:#666;white-space:nowrap;right:1580.5px;text-align:right;">2</div>
<div style="position:absolute;top:798.94px;font-size:12px;line-height:12px;font-weight:normal;color:#666;white-space:nowrap;right:1580.5px;text-align:right;">0</div>
<div style="position:absolute;top:814.64px;font-size:12px;line-height:12px;font-weight:normal;color:#666;white-space:nowrap;left:80.0px;width:600px;text-align:center;">May 25</div>
<div style="position:absolute;top:814.64px;font-size:12px;line-height:12px;font-weight:normal;color:#666;white-space:nowrap;left:175.01999999999998px;width:600px;text-align:center;">Jun 25</div>
<div style="position:absolute;top:814.64px;font-size:12px;line-height:12px;font-weight:normal;color:#666;white-space:nowrap;left:270.03999999999996px;width:600px;text-align:center;">Jul 25</div>
<div style="position:absolute;top:814.64px;font-size:12px;line-height:12px;font-weight:normal;color:#666;white-space:nowrap;left:365.05999999999995px;width:600px;text-align:center;">Aug 25</div>
<div style="position:absolute;top:814.64px;font-size:12px;line-height:12px;font-weight:normal;color:#666;white-space:nowrap;left:460.0799999999999px;width:600px;text-align:center;">Sep 25</div>
<div style="position:absolute;top:814.64px;font-size:12px;line-height:12px;font-weight:normal;color:#666;white-space:nowrap;left:555.0999999999999px;width:600px;text-align:center;">Oct 25</div>
<div style="position:absolute;top:814.64px;font-size:12px;line-height:12px;font-weight:normal;color:#666;white-space:nowrap;left:650.12px;width:600px;text-align:center;">Nov 25</div>
<div style="position:absolute;top:814.64px;font-size:12px;line-height:12px;font-weight:normal;color:#666;white-space:nowrap;left:745.1399999999999px;width:600px;text-align:center;">Dec 25</div>
<div style="position:absolute;top:814.64px;font-size:12px;line-height:12px;font-weight:normal;color:#666;white-space:nowrap;left:840.1599999999999px;width:600px;text-align:center;">Jan 26</div>
<div style="position:absolute;top:814.64px;font-size:12px;line-height:12px;font-weight:normal;color:#666;white-space:nowrap;left:935.1799999999998px;width:600px;text-align:center;">Feb 26</div>
<div style="position:absolute;top:814.64px;font-size:12px;line-height:12px;font-weight:normal;color:#666;white-space:nowrap;left:1030.1999999999998px;width:600px;text-align:center;">Mar 26</div>
<div style="position:absolute;top:814.64px;font-size:12px;line-height:12px;font-weight:normal;color:#666;white-space:nowrap;left:1125.22px;width:600px;text-align:center;">Apr 26</div>
<div style="position:absolute;left:1534px;top:370.2px;width:320px;height:230.6px;background:#fff;border-radius:10px;box-shadow:0 2px 6px rgba(30,40,60,.07);"></div>
<div style="position:absolute;left:1534px;top:415.0px;width:320px;height:1px;background:#e4e6ea;"></div>
<div style="position:absolute;top:385.07px;font-size:15.2px;line-height:15.2px;font-weight:bold;color:#243447;white-space:nowrap;left:1554.3px;">By Property Type</div>
<div style="position:absolute;left:1535px;top:457.7px;width:319px;height:1px;background:#f2f3f5;"></div>
<div style="position:absolute;left:1535px;top:491.7px;width:319px;height:1px;background:#f2f3f5;"></div>
<div style="position:absolute;left:1535px;top:525.7px;width:319px;height:1px;background:#f2f3f5;"></div>
<div style="position:absolute;left:1535px;top:559.6px;width:319px;height:1px;background:#f2f3f5;"></div>
<div style="position:absolute;top:433.16px;font-size:14px;line-height:14px;font-weight:normal;color:#374151;white-space:nowrap;left:1554.3px;">Apartment</div>
<div style="position:absolute;left:1810.4px;top:431px;width:22.6px;height:18px;background:#e8eef8;border-radius:9px;"></div>
<div style="position:absolute;top:434.34px;font-size:12px;line-height:12px;font-weight:bold;color:#1f5fa8;white-space:nowrap;left:1521.7px;width:600px;text-align:center;">2</div>
<div style="position:absolute;top:467.16px;font-size:14px;line-height:14px;font-weight:normal;color:#374151;white-space:nowrap;left:1554.3px;">House</div>
<div style="position:absolute;left:1812px;top:465px;width:21px;height:18px;background:#e8eef8;border-radius:9px;"></div>
<div style="position:absolute;top:468.34px;font-size:12px;line-height:12px;font-weight:bold;color:#1f5fa8;white-space:nowrap;left:1522.5px;width:600px;text-align:center;">1</div>
<div style="position:absolute;top:501.16px;font-size:14px;line-height:14px;font-weight:normal;color:#374151;white-space:nowrap;left:1554.3px;">Semi-detached House</div>
<div style="position:absolute;left:1812px;top:499px;width:21px;height:18px;background:#e8eef8;border-radius:9px;"></div>
<div style="position:absolute;top:502.34px;font-size:12px;line-height:12px;font-weight:bold;color:#1f5fa8;white-space:nowrap;left:1522.5px;width:600px;text-align:center;">1</div>
<div style="position:absolute;top:535.16px;font-size:14px;line-height:14px;font-weight:normal;color:#374151;white-space:nowrap;left:1554.3px;">Office</div>
<div style="position:absolute;left:1812px;top:533px;width:21px;height:18px;background:#e8eef8;border-radius:9px;"></div>
<div style="position:absolute;top:536.34px;font-size:12px;line-height:12px;font-weight:bold;color:#1f5fa8;white-space:nowrap;left:1522.5px;width:600px;text-align:center;">1</div>
<div style="position:absolute;top:569.16px;font-size:14px;line-height:14px;font-weight:normal;color:#374151;white-space:nowrap;left:1554.3px;">Other</div>
<div style="position:absolute;left:1804.3px;top:567px;width:28.7px;height:18px;background:#e8eef8;border-radius:9px;"></div>
<div style="position:absolute;top:570.34px;font-size:12px;line-height:12px;font-weight:bold;color:#1f5fa8;white-space:nowrap;left:1518.65px;width:600px;text-align:center;">15</div>
<div style="position:absolute;left:1534px;top:620.8px;width:320px;height:334.3px;background:#fff;border-radius:10px;box-shadow:0 2px 6px rgba(30,40,60,.07);"></div>
<div style="position:absolute;left:1534px;top:665.5999999999999px;width:320px;height:1px;background:#e4e6ea;"></div>
<div style="position:absolute;top:635.67px;font-size:15.2px;line-height:15.2px;font-weight:bold;color:#243447;white-space:nowrap;left:1554.3px;">Top Cities</div>
<div style="position:absolute;left:1535px;top:708.6px;width:319px;height:1px;background:#f2f3f5;"></div>
<div style="position:absolute;left:1535px;top:742.5px;width:319px;height:1px;background:#f2f3f5;"></div>
<div style="position:absolute;left:1535px;top:776.5px;width:319px;height:1px;background:#f2f3f5;"></div>
<div style="position:absolute;left:1535px;top:810.4px;width:319px;height:1px;background:#f2f3f5;"></div>
<div style="position:absolute;left:1535px;top:845.4px;width:319px;height:1px;background:#f2f3f5;"></div>
<div style="position:absolute;left:1535px;top:879.5px;width:319px;height:1px;background:#f2f3f5;"></div>
<div style="position:absolute;left:1535px;top:913.5px;width:319px;height:1px;background:#f2f3f5;"></div>
<svg style="position:absolute;left:1553.5px;top:684.3px;" width="10.5" height="13.5" viewBox="0 0 10.5 13.5"><path d="M5.25 0.3C2.5 0.3 0.3 2.5 0.3 5.3c0 3.3 4.2 7.6 4.95 8.2.75-.6 4.95-4.9 4.95-8.2 0-2.8-2.2-5-4.95-5z" fill="#243447"/></svg>
<div style="position:absolute;top:684.16px;font-size:14px;line-height:14px;font-weight:normal;color:#374151;white-space:nowrap;left:1568px;">München</div>
<div style="position:absolute;left:1810.4px;top:682px;width:22.6px;height:18px;background:#e8eef8;border-radius:9px;"></div>
<div style="position:absolute;top:685.34px;font-size:12px;line-height:12px;font-weight:bold;color:#1f5fa8;white-space:nowrap;left:1521.7px;width:600px;text-align:center;">4</div>
<svg style="position:absolute;left:1553.5px;top:718.3px;" width="10.5" height="13.5" viewBox="0 0 10.5 13.5"><path d="M5.25 0.3C2.5 0.3 0.3 2.5 0.3 5.3c0 3.3 4.2 7.6 4.95 8.2.75-.6 4.95-4.9 4.95-8.2 0-2.8-2.2-5-4.95-5z" fill="#243447"/></svg>
<div style="position:absolute;top:718.16px;font-size:14px;line-height:14px;font-weight:normal;color:#374151;white-space:nowrap;left:1568px;">Hamburg</div>
<div style="position:absolute;left:1810.4px;top:716px;width:22.6px;height:18px;background:#e8eef8;border-radius:9px;"></div>
<div style="position:absolute;top:719.34px;font-size:12px;line-height:12px;font-weight:bold;color:#1f5fa8;white-space:nowrap;left:1521.7px;width:600px;text-align:center;">3</div>
<svg style="position:absolute;left:1553.5px;top:752.8px;" width="10.5" height="13.5" viewBox="0 0 10.5 13.5"><path d="M5.25 0.3C2.5 0.3 0.3 2.5 0.3 5.3c0 3.3 4.2 7.6 4.95 8.2.75-.6 4.95-4.9 4.95-8.2 0-2.8-2.2-5-4.95-5z" fill="#243447"/></svg>
<div style="position:absolute;top:752.66px;font-size:14px;line-height:14px;font-weight:normal;color:#374151;white-space:nowrap;left:1568px;">Stuttgart</div>
<div style="position:absolute;left:1810.4px;top:750.5px;width:22.6px;height:18px;background:#e8eef8;border-radius:9px;"></div>
<div style="position:absolute;top:753.84px;font-size:12px;line-height:12px;font-weight:bold;color:#1f5fa8;white-space:nowrap;left:1521.7px;width:600px;text-align:center;">2</div>
<svg style="position:absolute;left:1553.5px;top:786.8px;" width="10.5" height="13.5" viewBox="0 0 10.5 13.5"><path d="M5.25 0.3C2.5 0.3 0.3 2.5 0.3 5.3c0 3.3 4.2 7.6 4.95 8.2.75-.6 4.95-4.9 4.95-8.2 0-2.8-2.2-5-4.95-5z" fill="#243447"/></svg>
<div style="position:absolute;top:786.66px;font-size:14px;line-height:14px;font-weight:normal;color:#374151;white-space:nowrap;left:1568px;">Düsseldorf</div>
<div style="position:absolute;left:1810.4px;top:784.5px;width:22.6px;height:18px;background:#e8eef8;border-radius:9px;"></div>
<div style="position:absolute;top:787.84px;font-size:12px;line-height:12px;font-weight:bold;color:#1f5fa8;white-space:nowrap;left:1521.7px;width:600px;text-align:center;">2</div>
<svg style="position:absolute;left:1553.5px;top:820.8px;" width="10.5" height="13.5" viewBox="0 0 10.5 13.5"><path d="M5.25 0.3C2.5 0.3 0.3 2.5 0.3 5.3c0 3.3 4.2 7.6 4.95 8.2.75-.6 4.95-4.9 4.95-8.2 0-2.8-2.2-5-4.95-5z" fill="#243447"/></svg>
<div style="position:absolute;top:820.66px;font-size:14px;line-height:14px;font-weight:normal;color:#374151;white-space:nowrap;left:1568px;">Berlin</div>
<div style="position:absolute;left:1810.4px;top:818.5px;width:22.6px;height:18px;background:#e8eef8;border-radius:9px;"></div>
<div style="position:absolute;top:821.84px;font-size:12px;line-height:12px;font-weight:bold;color:#1f5fa8;white-space:nowrap;left:1521.7px;width:600px;text-align:center;">2</div>
<svg style="position:absolute;left:1553.5px;top:855.0px;" width="10.5" height="13.5" viewBox="0 0 10.5 13.5"><path d="M5.25 0.3C2.5 0.3 0.3 2.5 0.3 5.3c0 3.3 4.2 7.6 4.95 8.2.75-.6 4.95-4.9 4.95-8.2 0-2.8-2.2-5-4.95-5z" fill="#243447"/></svg>
<div style="position:absolute;top:854.86px;font-size:14px;line-height:14px;font-weight:normal;color:#374151;white-space:nowrap;left:1568px;">Hannover</div>
<div style="position:absolute;left:1812px;top:852.7px;width:21px;height:18px;background:#e8eef8;border-radius:9px;"></div>
<div style="position:absolute;top:856.04px;font-size:12px;line-height:12px;font-weight:bold;color:#1f5fa8;white-space:nowrap;left:1522.5px;width:600px;text-align:center;">1</div>
<svg style="position:absolute;left:1553.5px;top:889.0px;" width="10.5" height="13.5" viewBox="0 0 10.5 13.5"><path d="M5.25 0.3C2.5 0.3 0.3 2.5 0.3 5.3c0 3.3 4.2 7.6 4.95 8.2.75-.6 4.95-4.9 4.95-8.2 0-2.8-2.2-5-4.95-5z" fill="#243447"/></svg>
<div style="position:absolute;top:888.86px;font-size:14px;line-height:14px;font-weight:normal;color:#374151;white-space:nowrap;left:1568px;">Nürnberg</div>
<div style="position:absolute;left:1812px;top:886.7px;width:21px;height:18px;background:#e8eef8;border-radius:9px;"></div>
<div style="position:absolute;top:890.04px;font-size:12px;line-height:12px;font-weight:bold;color:#1f5fa8;white-space:nowrap;left:1522.5px;width:600px;text-align:center;">1</div>
<svg style="position:absolute;left:1553.5px;top:923.0px;" width="10.5" height="13.5" viewBox="0 0 10.5 13.5"><path d="M5.25 0.3C2.5 0.3 0.3 2.5 0.3 5.3c0 3.3 4.2 7.6 4.95 8.2.75-.6 4.95-4.9 4.95-8.2 0-2.8-2.2-5-4.95-5z" fill="#243447"/></svg>
<div style="position:absolute;top:922.86px;font-size:14px;line-height:14px;font-weight:normal;color:#374151;white-space:nowrap;left:1568px;">Berg</div>
<div style="position:absolute;left:1812px;top:920.7px;width:21px;height:18px;background:#e8eef8;border-radius:9px;"></div>
<div style="position:absolute;top:924.04px;font-size:12px;line-height:12px;font-weight:bold;color:#1f5fa8;white-space:nowrap;left:1522.5px;width:600px;text-align:center;">1</div>
<div style="position:absolute;left:1534px;top:975.2px;width:320px;height:120px;background:#fff;border-radius:10px;box-shadow:0 2px 6px rgba(30,40,60,.07);"></div>
<div style="position:absolute;left:1534px;top:1019.5px;width:320px;height:1px;background:#e4e6ea;"></div>
<div style="position:absolute;top:990.27px;font-size:15.2px;line-height:15.2px;font-weight:bold;color:#243447;white-space:nowrap;left:1554.3px;">Energy Classes</div>
<div style="position:absolute;left:1554.2px;top:1035px;width:30px;height:23px;background:#27a85a;border-radius:4px;"></div>
<div style="position:absolute;top:1039.66px;font-size:14px;line-height:14px;font-weight:bold;color:#fff;white-space:nowrap;left:1269.2px;width:600px;text-align:center;">A</div>
<div style="position:absolute;left:1812px;top:1037.6px;width:21px;height:18px;background:#e8eef8;border-radius:9px;"></div>
<div style="position:absolute;top:1040.94px;font-size:12px;line-height:12px;font-weight:bold;color:#1f5fa8;white-space:nowrap;left:1522.5px;width:600px;text-align:center;">1</div>
<div style="position:absolute;left:1535px;top:1065.8px;width:319px;height:1px;background:#f0f1f3;"></div>
</body></html>
